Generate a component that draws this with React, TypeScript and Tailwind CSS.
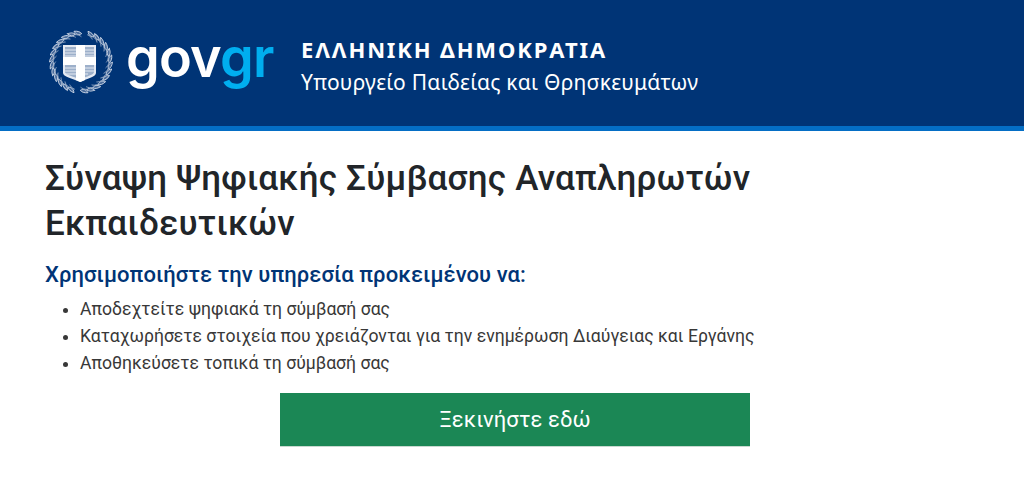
const leaves = Array.from({ length: 28 }, (_, i) => i);

function Emblem() {
  return (
    <svg width="66" height="66" viewBox="0 0 66 66" fill="none" className="shrink-0">
      {leaves.map((i) => {
        if (i === 0 || i === 14) return null;
        const a = (i / 28) * 360;
        return (
          <g key={i} transform={`rotate(${a} 33 33)`}>
            <path d="M33 1.5 C37 2 39 3.5 40 5.5 C37 6.5 34.5 5.5 33 1.5Z" stroke="#c9d4e4" strokeWidth="0.9" fill="#4a6c9c" />
            <path d="M33 5 C36 5.5 38 7 39 8.5" stroke="#9fb0c9" strokeWidth="0.8" />
          </g>
        );
      })}
      <path d="M15 16H48V44C48 48 40 49 32 53C24 49 15 48 15 44Z" fill="#e4e9f2" />
      <path d="M17 18H46V43C46 46 39 47 32 50.5C25 47 17 46 17 43Z" fill="#9db0ca" />
      <path d="M17 21H46M17 24H46M17 27H46M17 39H46M17 42H46M17 45H40" stroke="#e4e9f2" strokeWidth="1" />
      <path d="M28 16H37V28H48V36H37V51L32.5 53L28 51V36H15V28H28Z" fill="#ffffff" />
    </svg>
  );
}

export default function App() {
  return (
    <div className="min-h-[478px] bg-white font-['Roboto',sans-serif]">
      <header className="h-[131px] bg-[#003476] border-b-[5px] border-[#046ec5] flex items-start pl-[48px] pt-[29px]">
        <Emblem />
        <div className="ml-[12px] -mt-[7px] font-['Inter',sans-serif] font-semibold text-[54px] leading-[72px] tracking-[-0.8px] text-white w-[175px] shrink-0">
          gov<span className="text-[#00aeef]">gr</span>
        </div>
        <div className="font-['Noto_Sans',sans-serif] text-white pt-[4px]">
          <div className="text-[22px] leading-[32px] font-bold tracking-[1.9px]">ΕΛΛΗΝΙΚΗ ΔΗΜΟΚΡΑΤΙΑ</div>
          <div className="text-[21px] leading-[32px] mt-[1px] tracking-[0.25px]">Υπουργείο Παιδείας και Θρησκευμάτων</div>
        </div>
      </header>
      <main className="pl-[45px] pt-[25px] w-[795px]">
        <h1 className="text-[35px] leading-[45px] font-medium text-[#212529] tracking-[0.2px]">
          Σύναψη Ψηφιακής Σύμβασης Αναπληρωτών Εκπαιδευτικών
        </h1>
        <h2 className="mt-[15px] text-[22px] leading-[28px] font-medium text-[#003476] tracking-[0.07px]">
          Χρησιμοποιήστε την υπηρεσία προκειμένου να:
        </h2>
        <ul className="mt-[7px] list-disc pl-[35px] text-[17.6px] leading-[27px] text-[#383838]">
          <li>Αποδεχτείτε ψηφιακά τη σύμβασή σας</li>
          <li>Καταχωρήσετε στοιχεία που χρειάζονται για την ενημέρωση Διαύγειας και Εργάνης</li>
          <li>Αποθηκεύσετε τοπικά τη σύμβασή σας</li>
        </ul>
        <div className="mt-[16px] ml-[235px]">
          <button className="w-[470px] h-[54px] bg-[#1b8755] text-white text-[22px] tracking-[0.1px] border-b border-[#c9d9d0]">
            Ξεκινήστε εδώ
          </button>
        </div>
      </main>
    </div>
  );
}
